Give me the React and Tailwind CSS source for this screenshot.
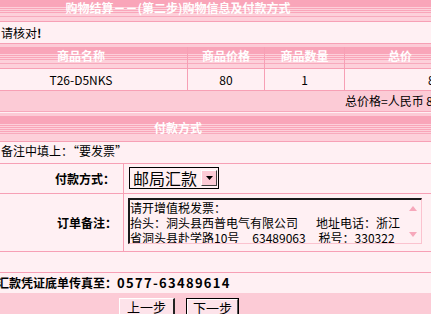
export default function App() {
  const band22 =
    "bg-[linear-gradient(to_bottom,#f9a5b9_0px,#f9a5b9_7px,#fdd0da_7px,#fdd0da_8px,#f9a5b9_8px,#f9a5b9_9px,#fdd0da_9px,#fdd0da_10px,#f9a5b9_10px,#f9a5b9_11px,#fdd0da_11px,#fdd0da_12px,#f9a5b9_12px,#f9a5b9_13px,#fdd0da_13px,#fdd0da_16px,#f7aabd_16px,#f7aabd_17px,#fdd0da_17px,#fdd0da_100%)]";
  const band26 =
    "bg-[linear-gradient(to_bottom,#f9a5b9_0px,#f9a5b9_8px,#fdd0da_8px,#fdd0da_9px,#f9a5b9_9px,#f9a5b9_10px,#fdd0da_10px,#fdd0da_11px,#f9a5b9_11px,#f9a5b9_12px,#fdd0da_12px,#fdd0da_13px,#f9a5b9_13px,#f9a5b9_14px,#fdd0da_14px,#fdd0da_15px,#f9a5b9_15px,#f9a5b9_16px,#fdd0da_16px,#fdd0da_17px,#f7aabd_17px,#f7aabd_18px,#fdd0da_18px,#fdd0da_100%)]";

  return (
    <div className="w-[431px] h-[314px] overflow-hidden bg-[#fccbd6] text-[12px] text-black font-['Noto_Sans_CJK_SC','Noto_Sans',sans-serif]">
      {/* title band */}
      <div className={`h-[22px] border-b border-[#f7a0b5] ${band22}`}>
        <div className="w-[356px] text-center text-white font-bold leading-[16px] whitespace-nowrap">
          购物结算－－(第二步)购物信息及付款方式
        </div>
      </div>

      {/* 请核对 */}
      <div className="h-[22px] bg-[#fff0f3] border-b border-[#f7a0b5] leading-[21px] pl-[1px] whitespace-nowrap">
        请核对<span className="font-bold">!</span>
      </div>

      <div className="h-[3px]" />

      {/* table header */}
      <div className={`h-[22px] border-b border-[#f7a0b5] flex w-[520px] text-white font-bold leading-[18px] whitespace-nowrap ${band22}`}>
        <div className="w-[188px] border-r border-[#f7a0b5] pr-[25px] text-center">商品名称</div>
        <div className="w-[77px] border-r border-[#f7a0b5] text-center">商品价格</div>
        <div className="w-[80px] border-r border-[#f7a0b5] text-center">商品数量</div>
        <div className="w-[110px] text-center">总价</div>
      </div>

      {/* data row */}
      <div className="h-[22px] bg-[#fff0f3] border-b border-[#f7a0b5] flex w-[520px] leading-[21px] whitespace-nowrap">
        <div className="w-[188px] border-r border-[#f7a0b5] pr-[25px] text-center">T26-D5NKS</div>
        <div className="w-[77px] border-r border-[#f7a0b5] text-center">80</div>
        <div className="w-[80px] border-r border-[#f7a0b5] text-center">1</div>
        <div className="w-[160px] pl-[83px]">80</div>
      </div>

      {/* total */}
      <div className="h-[20px] pl-[345px] leading-[20px] whitespace-nowrap w-[520px]">总价格=人民币 80元</div>
      <div className="h-[1px] bg-[#f7a8bb]" />
      <div className="h-[1px] bg-[#fff0f3]" />
      <div className="h-[3px]" />

      {/* payment band */}
      <div className={`h-[26px] border-b border-[#f7a0b5] ${band26}`}>
        <div className="w-[356px] text-center text-white font-bold leading-[24px]">付款方式</div>
      </div>

      {/* 备注 */}
      <div className="h-[22px] bg-[#fff0f3] border-b border-[#f7a0b5] leading-[18px] pl-[1px] whitespace-nowrap">
        备注中填上：“要发票”
      </div>

      {/* 付款方式 row */}
      <div className="h-[30px] bg-[#fff0f3] border-b border-[#f7a0b5] flex">
        <div className="w-[124px] border-r border-[#f7a0b5] flex items-center justify-end pr-[8px] font-bold whitespace-nowrap">
          付款方式：
        </div>
        <div className="pl-[5px] pt-[3px]">
          <div className="w-[90px] h-[22px] border border-black flex items-center bg-[#fff0f3]">
            <span className="text-[16px] leading-[20px] pl-[3px] whitespace-nowrap">邮局汇款</span>
            <div className="ml-auto mr-[1px] w-[16px] h-[16px] bg-[#fccbd6] border-t border-l border-t-white border-l-white border-r border-b border-r-[#404040] border-b-[#404040] flex items-center justify-center">
              <svg width="7" height="4" viewBox="0 0 7 4">
                <path d="M0 0H7L3.5 4Z" fill="#000" />
              </svg>
            </div>
          </div>
        </div>
      </div>

      {/* 订单备注 row */}
      <div className="h-[58px] bg-[#fff0f3] border-b border-[#f7a0b5] flex">
        <div className="w-[124px] border-r border-[#f7a0b5] flex items-center justify-end pr-[6px] font-bold whitespace-nowrap">
          订单备注：
        </div>
        <div className="pl-[4px] pt-[4px]">
          <div className="w-[294px] h-[46px] flex border-t-2 border-l-2 border-t-[#1a1a1a] border-l-[#1a1a1a] border-r border-b border-r-[#fbc3cf] border-b-[#fbc3cf] bg-[#fff0f3] overflow-hidden">
            <div className="flex-1 leading-[15px] whitespace-nowrap overflow-hidden">
              <div>请开增值税发票：</div>
              <div>
                抬头：洞头县西普电气有限公司<span className="ml-[18px]">地址电话：浙江</span>
              </div>
              <div>
                省洞头县赴学路10号<span className="ml-[13px]">63489063</span>
                <span className="ml-[13px]">税号：330322</span>
              </div>
            </div>
            <div className="w-[16px] flex flex-col items-center justify-between pt-[6px] pb-[6px]">
              <svg width="8" height="5" viewBox="0 0 8 5">
                <path d="M0 5H8L4 0Z" fill="#f7a8bb" />
              </svg>
              <svg width="8" height="5" viewBox="0 0 8 5">
                <path d="M0 0H8L4 5Z" fill="#f7a8bb" />
              </svg>
            </div>
          </div>
        </div>
      </div>

      {/* empty row */}
      <div className="h-[21px] bg-[#fff0f3] border-b border-[#f7a0b5]" />

      {/* 汇款 row */}
      <div className="h-[20px] bg-[#fff0f3] leading-[20px] font-bold whitespace-nowrap">
        <span className="-ml-[3px]">
          汇款凭证底单传真至：<span className="text-[13px] tracking-[1.3px]">0577-63489614</span>
        </span>
      </div>

      {/* buttons */}
      <div className="flex pt-[5px]">
        <div className="ml-[119px] w-[56px] h-[22px] bg-[#fde3ea] border-t border-l border-t-white border-l-white border-r-2 border-b-2 border-r-[#222] border-b-[#222] flex items-start justify-center pt-[1px] leading-[14px] text-[13px] whitespace-nowrap">
          上一步
        </div>
        <div className="ml-[11px] w-[53px] h-[22px] border border-black flex">
          <div className="flex-1 bg-[#fde3ea] border-t border-l border-t-white border-l-white border-r border-b border-r-[#555] border-b-[#555] flex items-start justify-center pt-[1px] leading-[14px] text-[13px] whitespace-nowrap">
            下一步
          </div>
        </div>
      </div>
    </div>
  );
}
